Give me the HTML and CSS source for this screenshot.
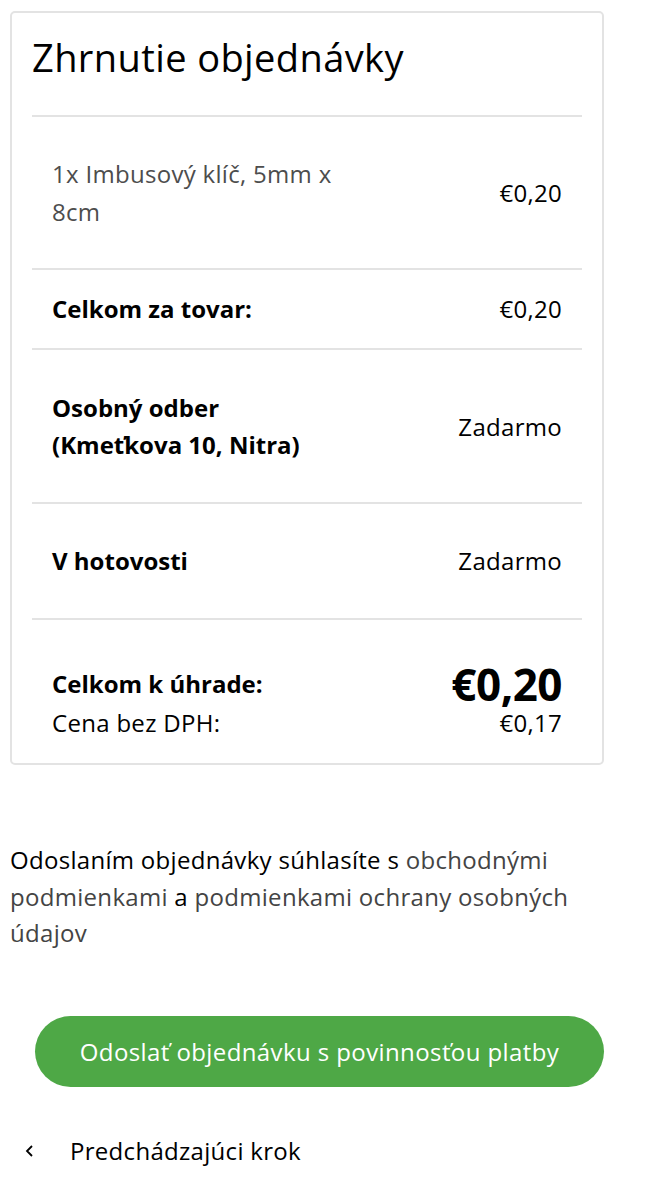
FILE: index.html
```html
<!DOCTYPE html>
<html lang="sk">
<head>
<meta charset="utf-8">
<link rel="stylesheet" href="styles.css">
</head>
<body>
<div class="page">
  <section class="card">
    <h1 class="title">Zhrnutie objednávky</h1>
    <div class="row row-item">
      <div class="label muted">1x Imbusový klíč, 5mm x<br>8cm</div>
      <div class="value">€0,20</div>
    </div>
    <div class="row row-sub">
      <div class="label bold">Celkom za tovar:</div>
      <div class="value">€0,20</div>
    </div>
    <div class="row row-ship">
      <div class="label bold">Osobný odber<br>(Kmeťkova 10, Nitra)</div>
      <div class="value">Zadarmo</div>
    </div>
    <div class="row row-pay">
      <div class="label bold">V hotovosti</div>
      <div class="value">Zadarmo</div>
    </div>
    <div class="total">
      <div class="total-line main">
        <div class="label bold">Celkom k úhrade:</div>
        <div class="big">€0,20</div>
      </div>
      <div class="total-line small">
        <div class="label">Cena bez DPH:</div>
        <div class="value">€0,17</div>
      </div>
    </div>
  </section>

  <p class="terms">Odoslaním objednávky súhlasíte s <a class="link" href="#">obchodnými podmienkami</a> a <a class="link" href="#">podmienkami ochrany osobných údajov</a></p>

  <button class="submit" type="button">Odoslať objednávku s povinnosťou platby</button>

  <a class="back" href="#"><span class="chev"><svg width="12" height="14" viewBox="0 0 12 14"><path d="M8 2 L3 7 L8 12" fill="none" stroke="#000" stroke-width="1.8"/></svg></span><span>Predchádzajúci krok</span></a>
</div>
</body>
</html>
```

FILE: styles.css
```css
* { box-sizing: border-box; }
html, body { margin: 0; padding: 0; background: #fff; }
body {
  font-family: "Open Sans", "Liberation Sans", sans-serif;
  color: #000;
  font-size: 24px;
  letter-spacing: 0.3px;
}
.page { padding: 11px 50px 0 10px; }
.card {
  border: 2px solid #e3e3e3;
  border-radius: 5px;
  padding: 0 20px 22px 20px;
  width: 594px;
}
.title {
  margin: 0;
  font-weight: 400;
  font-size: 38px;
  line-height: 40px;
  padding: 24px 0 38px 0;
  border-bottom: 2px solid #e3e3e3;
  letter-spacing: 0.4px;
}
.row {
  display: flex;
  justify-content: space-between;
  align-items: center;
  padding: 37.5px 20px;
  border-bottom: 2px solid #e3e3e3;
  line-height: 38px;
}
.row-sub { padding: 20px 20px; }
.row-ship { padding: 39px 20px; line-height: 37px; }
.row-pay { padding: 38px 20px; }
.muted { color: #4d4d4d; }
.bold { font-weight: 700; letter-spacing: 0; }
.total { padding: 42px 20px 0 20px; }
.total-line {
  display: flex;
  justify-content: space-between;
  align-items: center;
}
.main { height: 43px; }
.big { font-size: 44px; font-weight: 700; line-height: 44px; letter-spacing: -0.5px; }
.small { line-height: 36px; }
.terms {
  margin: 77px 0 0 0;
  line-height: 36.5px;
  width: 600px;
}
.link { color: #444; text-decoration: none; }
.submit {
  display: block;
  margin: 64px 0 0 25px;
  width: 569px;
  height: 71px;
  border: 0;
  border-radius: 36px;
  background: #4ea846;
  color: #fff;
  font-family: inherit;
  font-size: 24px;
  letter-spacing: 0.4px;
}
.back {
  display: flex;
  align-items: center;
  margin: 46px 0 0 14px;
  color: #000;
  text-decoration: none;
  line-height: 36px;
}
.chev { width: 46px; display: flex; align-items: center; }
```
